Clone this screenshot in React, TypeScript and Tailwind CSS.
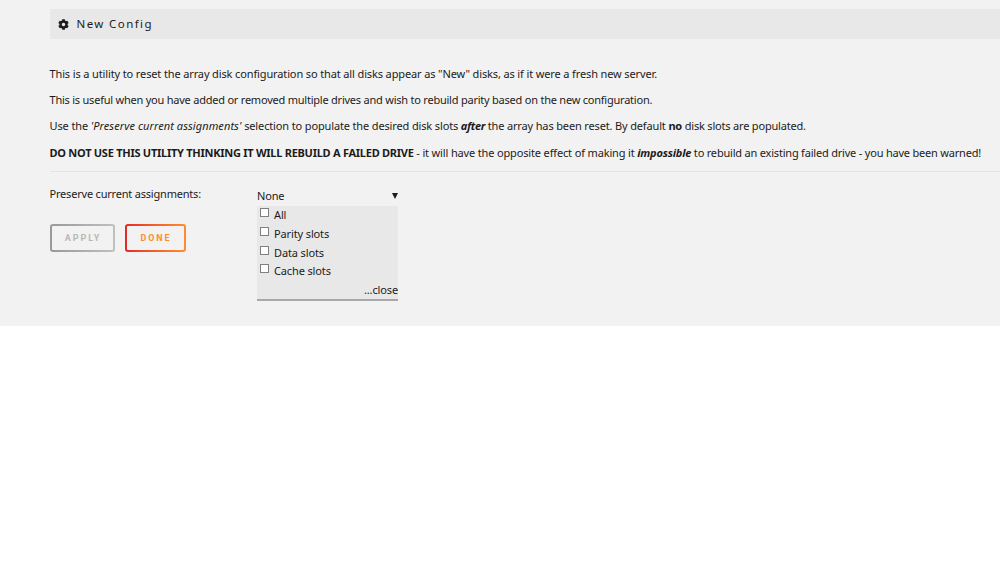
import type { ReactNode } from "react";
import { FaCog } from "react-icons/fa";

const slots = ["All", "Parity slots", "Data slots", "Cache slots"];

function Line({ className, children }: { className: string; children: ReactNode }) {
  return <p className={`whitespace-pre leading-4 ${className}`}>{children}</p>;
}

export default function App() {
  return (
    <div className="h-[569px] w-[1000px] overflow-hidden bg-white font-['Noto_Sans',sans-serif] text-[11px] text-[#1c1b1b]">
      <main className="h-[326px] bg-[#f2f2f2] pt-[9px] pl-[49.5px]">
        <header className="flex h-[30px] items-center bg-[#e8e8e8] pl-2">
          <FaCog className="size-[11px]" />
          <h1 className="ml-2 text-[11.5px] tracking-[1.4px]">New Config</h1>
        </header>
        <section className="flex h-[133px] flex-col gap-2.5 border-b border-[#e3e3e3] pt-[27px]">
          <Line className="tracking-[-0.13px]">This is a utility to reset the array disk configuration so that all disks appear as "New" disks, as if it were a fresh new server.</Line>
          <Line className="tracking-[-0.225px]">This is useful when you have added or removed multiple drives and wish to rebuild parity based on the new configuration.</Line>
          <Line className="tracking-[-0.12px]">Use the <em className="tracking-[0.08px]">'Preserve current assignments'</em><span className="tracking-[-0.14px]"> selection to populate the desired disk slots </span><strong className="tracking-[-0.35px]"><em>after</em></strong><span className="tracking-[-0.15px]"> the array has been reset. By default </span><strong className="tracking-[-0.2px]">no</strong><span className="tracking-[-0.19px]"> disk slots are populated.</span></Line>
          <Line className="pt-px tracking-[-0.15px]"><strong className="tracking-[-0.26px]">DO NOT USE THIS UTILITY THINKING IT WILL REBUILD A FAILED DRIVE</strong> - it will have the opposite effect of making it <strong className="tracking-[-0.2px]"><em>impossible</em></strong><span className="tracking-[-0.2px]"> to rebuild an existing failed drive - you have been warned!</span></Line>
        </section>
        <form className="flex">
          <div className="w-[207.5px] pt-[14px]">
            <label className="block leading-4 tracking-[-0.2px]">Preserve current assignments:</label>
            <div className="mt-[22px] flex gap-2.5">
              <button type="button" className="h-7 w-[65px] rounded-[3px] bg-linear-to-r from-[#999999] to-[#c0c0c0] p-[2px]">
                <span className="flex h-full items-center justify-center rounded-[1px] bg-[#f2f2f2] pt-px pl-[2px] font-['Roboto',sans-serif] text-[9px] font-bold tracking-[1.9px] text-[#b8b8b8]">APPLY</span>
              </button>
              <button type="button" className="h-7 w-[61px] rounded-[3px] bg-linear-to-r from-[#e22828] to-[#ff8c2f] p-[2px]">
                <span className="flex h-full items-center justify-center rounded-[1px] bg-[#f2f2f2] pt-px pl-[2px] font-['Roboto',sans-serif] text-[9px] font-bold tracking-[1.9px] text-[#ff8c2f]">DONE</span>
              </button>
            </div>
          </div>
          <div className="w-[141px] pt-[15px]">
            <div className="mb-px flex h-[18px] items-center justify-between tracking-[-0.15px]">
              <span>None</span>
              <svg className="size-[6px]" viewBox="0 0 6 6"><path d="M0 0h6L3 6z" fill="#1c1b1b" /></svg>
            </div>
            <div className="h-[95px] border-b-2 border-[#a8a8a8] bg-[#e8e8e8] tracking-[-0.13px]">
              {slots.map((slot) => (
                <label key={slot} className="flex h-[18.75px] items-start pl-[3px]">
                  <input type="checkbox" className="mt-[2px] size-[9px] appearance-none border border-[#808080] bg-white" />
                  <span className="ml-[5px] pt-[1px] leading-4">{slot}</span>
                </label>
              ))}
              <div className="text-right leading-[18px]">...close</div>
            </div>
          </div>
        </form>
      </main>
    </div>
  );
}
